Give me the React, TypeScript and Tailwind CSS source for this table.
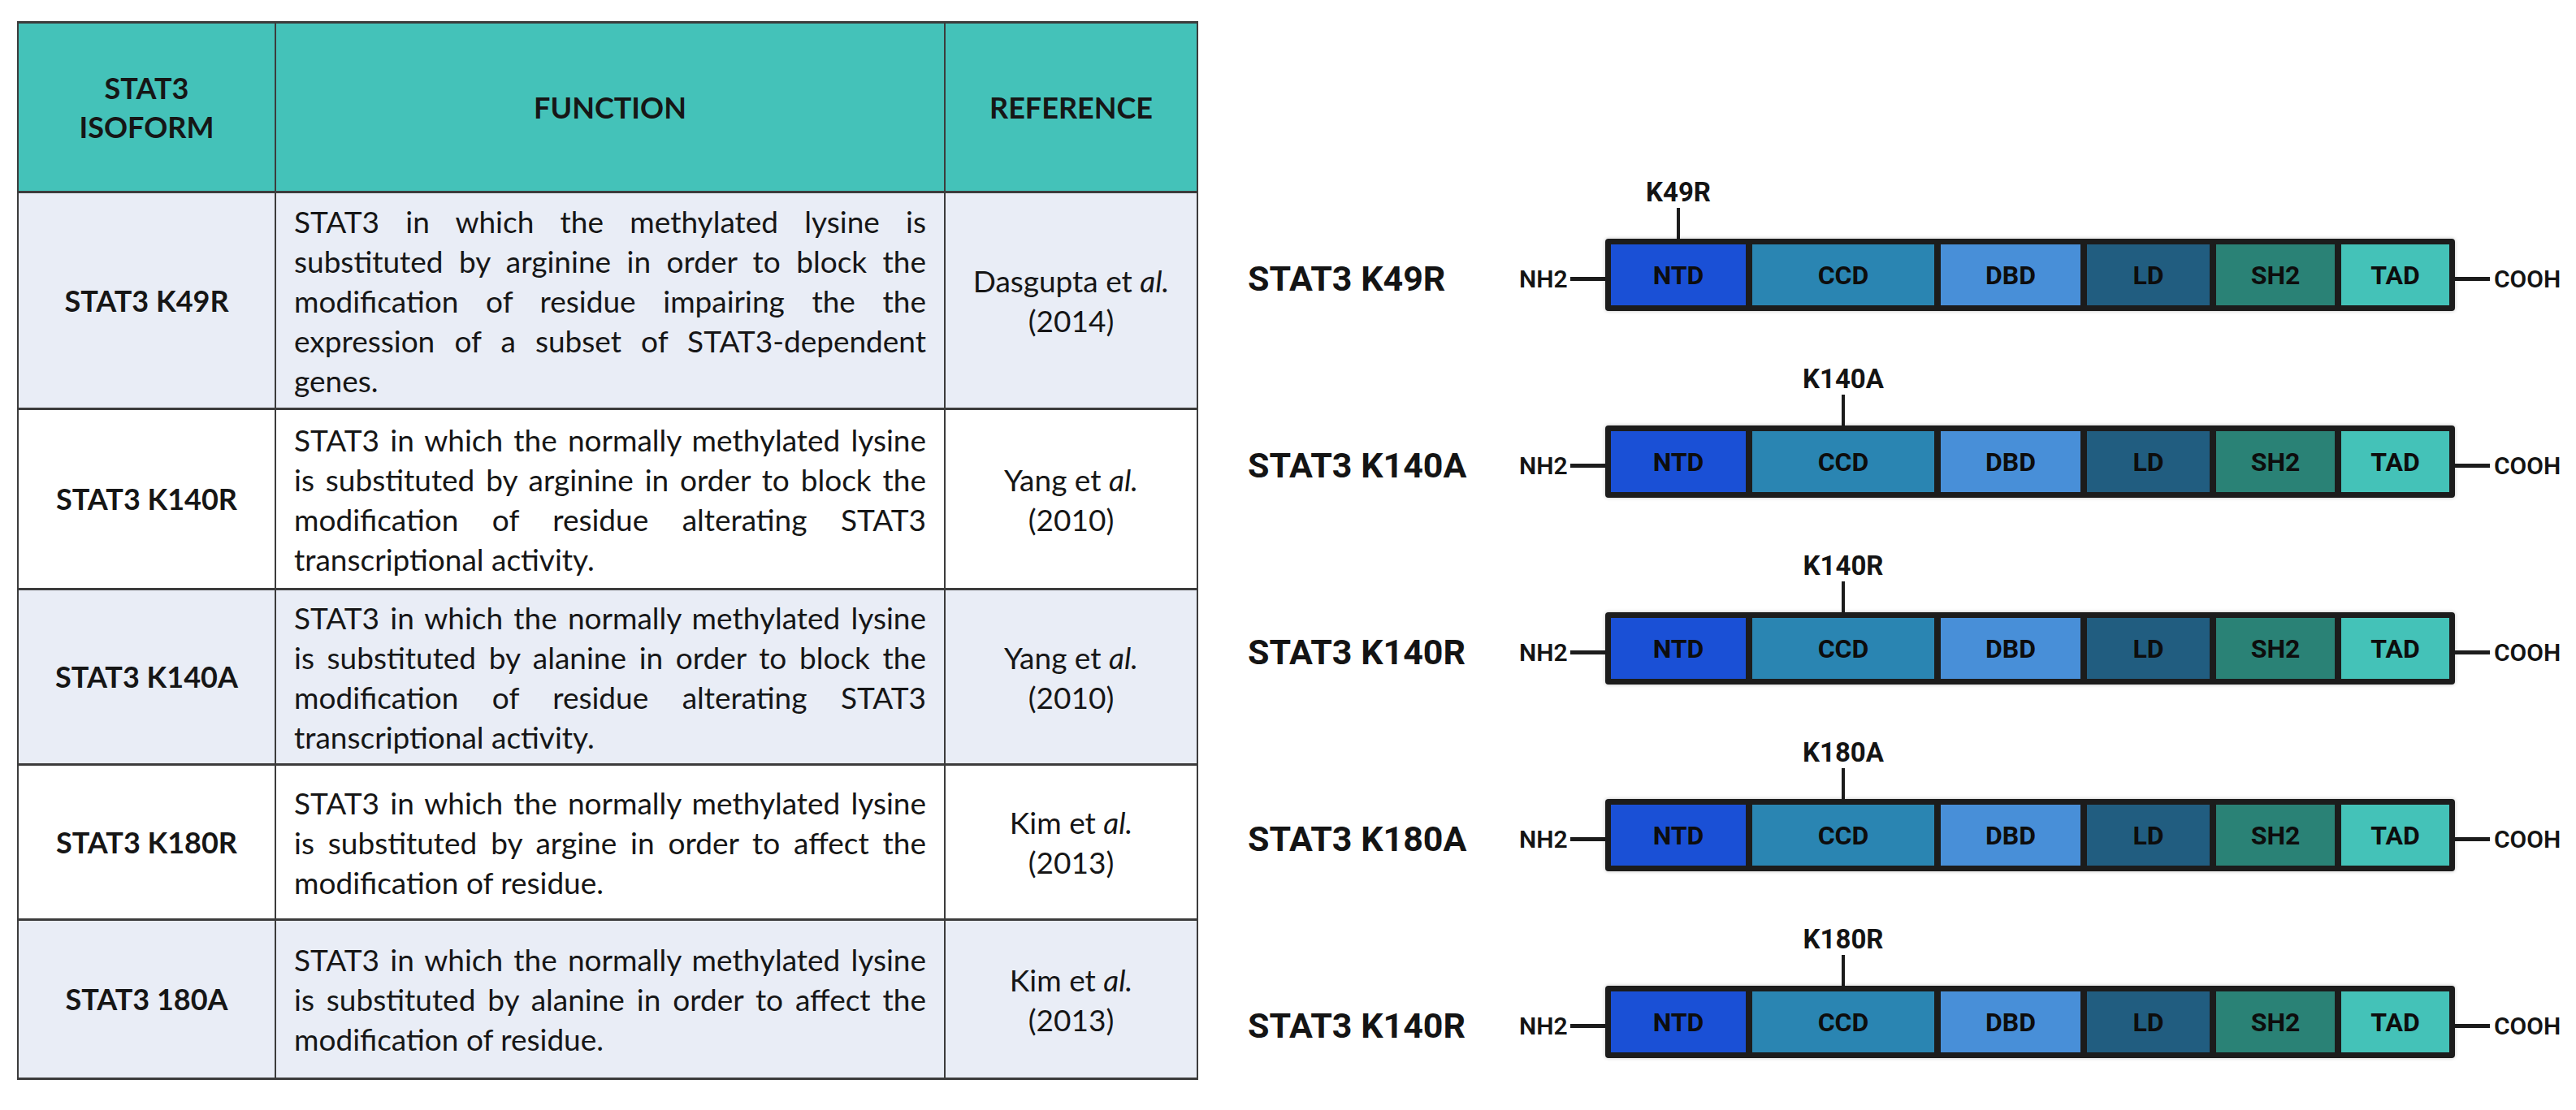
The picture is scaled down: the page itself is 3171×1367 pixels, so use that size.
const TABLE_FONT = { fontFamily: 'Lato, "Open Sans", "Liberation Sans", sans-serif' };

type Row = {
  isoform: string;
  lines: string[];
  author: string;
  year: string;
  bg: string;
  h: string;
};

const ROWS: Row[] = [
  {
    isoform: 'STAT3 K49R',
    lines: [
      'STAT3 in which the methylated lysine is',
      'substituted by arginine in order to block the',
      'modification of residue impairing the the',
      'expression of a subset of STAT3-dependent',
      'genes.',
    ],
    author: 'Dasgupta',
    year: '2014',
    bg: 'bg-[#e9edf6]',
    h: 'h-[267px]',
  },
  {
    isoform: 'STAT3 K140R',
    lines: [
      'STAT3 in which the normally methylated lysine',
      'is substituted by arginine in order to block the',
      'modification of residue alterating STAT3',
      'transcriptional activity.',
    ],
    author: 'Yang',
    year: '2010',
    bg: 'bg-white',
    h: 'h-[222px]',
  },
  {
    isoform: 'STAT3 K140A',
    lines: [
      'STAT3 in which the normally methylated lysine',
      'is substituted by alanine in order to block the',
      'modification of residue alterating STAT3',
      'transcriptional activity.',
    ],
    author: 'Yang',
    year: '2010',
    bg: 'bg-[#e9edf6]',
    h: 'h-[216px]',
  },
  {
    isoform: 'STAT3 K180R',
    lines: [
      'STAT3 in which the normally methylated lysine',
      'is substituted by argine in order to affect the',
      'modification of residue.',
    ],
    author: 'Kim',
    year: '2013',
    bg: 'bg-white',
    h: 'h-[191px]',
  },
  {
    isoform: 'STAT3 180A',
    lines: [
      'STAT3 in which the normally methylated lysine',
      'is substituted by alanine in order to affect the',
      'modification of residue.',
    ],
    author: 'Kim',
    year: '2013',
    bg: 'bg-[#e9edf6]',
    h: 'h-[196px]',
  },
];

const DOMAINS = [
  { name: 'NTD', w: 'w-[166px]', bg: 'bg-[#1a50d6]' },
  { name: 'CCD', w: 'w-[224px]', bg: 'bg-[#2a85b2]' },
  { name: 'DBD', w: 'w-[172px]', bg: 'bg-[#488fd8]' },
  { name: 'LD', w: 'w-[151px]', bg: 'bg-[#215d80]' },
  { name: 'SH2', w: 'w-[146px]', bg: 'bg-[#2a8276]' },
  { name: 'TAD', w: 'w-[133px]', bg: 'bg-[#44c2b8]' },
];

const CONSTRUCTS = [
  { label: 'STAT3 K49R', site: 'K49R', at: 0 },
  { label: 'STAT3 K140A', site: 'K140A', at: 1 },
  { label: 'STAT3 K140R', site: 'K140R', at: 1 },
  { label: 'STAT3 K180A', site: 'K180A', at: 1 },
  { label: 'STAT3 K140R', site: 'K180R', at: 1 },
];

const cell = 'border-r-2 border-b-[3px] border-[#3c3c3c]';

function IsoformTable() {
  return (
    <div
      className="ml-[21px] mt-[26px] self-start grid grid-cols-[317px_824px_311px] border-l-2 border-t-[3px] border-[#3c3c3c] text-[#161616] text-[37px] leading-[49px]"
      style={TABLE_FONT}
    >
      <div className={`${cell} h-[209px] bg-[#44c2b9] flex flex-col items-center justify-center font-bold text-[36px] leading-[48px]`}>
        <span>STAT3</span>
        <span>ISOFORM</span>
      </div>
      <div className={`${cell} h-[209px] bg-[#44c2b9] flex items-center justify-center font-bold text-[36px]`}>FUNCTION</div>
      <div className={`${cell} h-[209px] bg-[#44c2b9] flex items-center justify-center font-bold text-[36px]`}>REFERENCE</div>

      {ROWS.map((row) => (
        <div key={row.isoform} className="contents">
          <div className={`${cell} ${row.h} ${row.bg} flex items-center justify-center font-bold text-[36px]`}>{row.isoform}</div>
          <div className={`${cell} ${row.h} ${row.bg} flex flex-col justify-center pl-[22px] pr-[22px] text-justify`}>
            {row.lines.map((line, i) => (
              <span
                key={i}
                className={i < row.lines.length - 1 ? 'block [text-align-last:justify]' : 'block'}
              >
                {line}
              </span>
            ))}
          </div>
          <div className={`${cell} ${row.h} ${row.bg} flex flex-col items-center justify-center text-center`}>
            <span>
              {row.author} et <i>al.</i>
            </span>
            <span>({row.year})</span>
          </div>
        </div>
      ))}
    </div>
  );
}

function Construct({ label, site, at }: { label: string; site: string; at: number }) {
  return (
    <div className="flex flex-col">
      {/* mutation site marker, aligned on the domain columns */}
      <div className="ml-[440px] flex gap-[8px] px-[7px]">
        {DOMAINS.map((d, i) => (
          <div key={d.name} className={`${d.w} flex flex-col items-center`}>
            {i === at && (
              <>
                <span className="h-[30px] text-[33px] leading-[30px] font-bold">{site}</span>
                <span className="mt-[4px] h-[38px] w-[4px] bg-[#1c1c1c]" />
              </>
            )}
            {i !== at && <span className="h-[72px]" />}
          </div>
        ))}
      </div>
      <div className="flex items-center">
        <div className="flex items-center w-[440px]">
          <span className="w-[334px] text-[43px] font-bold">{label}</span>
          <span className="text-[30px] font-semibold">NH2</span>
          <span className="ml-[3px] h-[5px] flex-1 bg-[#1c1c1c]" />
        </div>
        <div className="mb-[10px] flex gap-[8px] p-[7px] h-[89px] bg-[#1c1c1c] rounded-[4px] shadow-[0_0_4px_rgba(0,0,0,0.25)]">
          {DOMAINS.map((d) => (
            <div key={d.name} className={`${d.w} ${d.bg} flex items-center justify-center text-[32px] font-bold text-[#0d0d0d]`}>
              {d.name}
            </div>
          ))}
        </div>
        <span className="h-[5px] w-[43px] bg-[#1c1c1c]" />
        <span className="ml-[5px] text-[30px] font-semibold">COOH</span>
      </div>
    </div>
  );
}

function DomainMaps() {
  return (
    <div
      className="ml-[61px] pt-[222px] flex flex-col gap-[59px] text-[#141414] leading-none"
      style={{ fontFamily: 'Roboto, "Liberation Sans", sans-serif' }}
    >
      {CONSTRUCTS.map((c, i) => (
        <Construct key={i} label={c.label} site={c.site} at={c.at} />
      ))}
    </div>
  );
}

export default function App() {
  return (
    <div className="w-[3171px] h-[1367px] bg-white flex">
      <IsoformTable />
      <DomainMaps />
    </div>
  );
}
